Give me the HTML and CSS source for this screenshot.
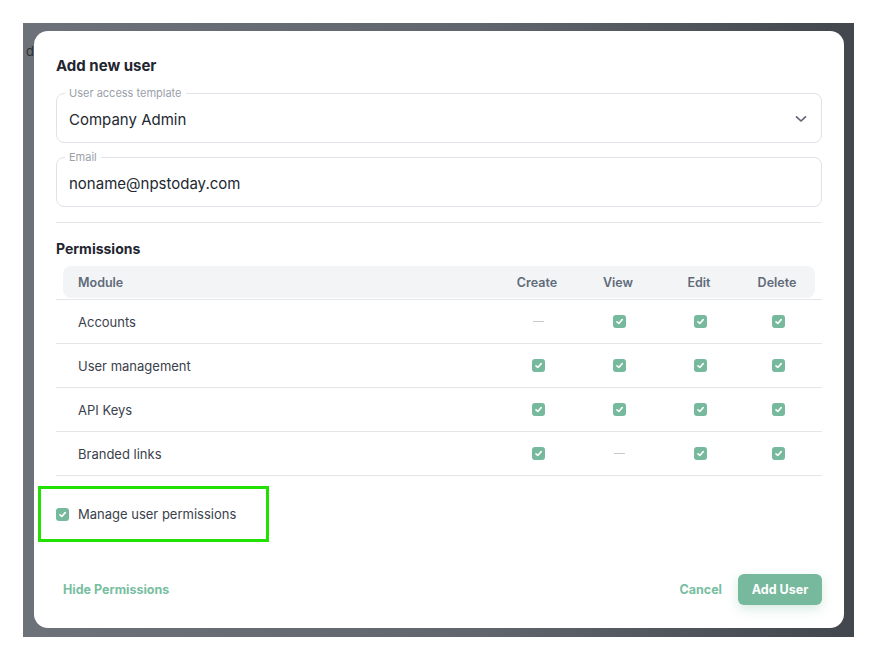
FILE: index.html
```html
<!DOCTYPE html>
<html lang="en">
<head>
    <meta charset="UTF-8">
    <meta name="viewport" content="width=device-width, initial-scale=1.0">
    <title>Add new user</title>
    <link rel="stylesheet" href="styles.css">
</head>
<body>
    <div class="backdrop">
        <div class="page-peek">d</div>
        <div class="modal">
            <h1>Add new user</h1>
            <fieldset class="field">
                <legend>User access template</legend>
                <div class="field-value">
                    <span>Company Admin</span>
                    <svg class="chevron" width="12" height="8" viewBox="0 0 12 8"><path d="M1.5 1.8 L6 6 L10.5 1.8" fill="none" stroke="#5f6773" stroke-width="1.7" stroke-linecap="round" stroke-linejoin="round"/></svg>
                </div>
            </fieldset>
            <fieldset class="field">
                <legend>Email</legend>
                <div class="field-value">
                    <span>noname@npstoday.com</span>
                </div>
            </fieldset>
            <hr class="divider">
            <h2>Permissions</h2>
            <div class="perm-table">
                <div class="perm-head-wrap">
                    <div class="perm-row perm-head">
                        <div class="module">Module</div>
                        <div>Create</div>
                        <div>View</div>
                        <div>Edit</div>
                        <div>Delete</div>
                    </div>
                </div>
                <div id="permRows"></div>
            </div>
            <div class="manage-box">
                <span class="check"></span>
                <span>Manage user permissions</span>
            </div>
            <div class="footer">
                <a class="link-btn hide-link">Hide Permissions</a>
                <div class="footer-actions">
                    <a class="link-btn">Cancel</a>
                    <button class="primary">Add User</button>
                </div>
            </div>
        </div>
    </div>
    <script>
        const modules = [
            { name: 'Accounts', perms: [false, true, true, true] },
            { name: 'User management', perms: [true, true, true, true] },
            { name: 'API Keys', perms: [true, true, true, true] },
            { name: 'Branded links', perms: [true, false, true, true] }
        ];
        const rows = document.getElementById('permRows');
        modules.forEach((m) => {
            const row = document.createElement('div');
            row.className = 'perm-row perm-body';
            let html = `<div class="module">${m.name}</div>`;
            m.perms.forEach((on) => {
                html += on ? '<div><span class="check"></span></div>' : '<div><span class="dash"></span></div>';
            });
            row.innerHTML = html;
            rows.appendChild(row);
        });
    </script>
</body>
</html>
```

FILE: styles.css
```css
body {
    margin: 0;
    background: #fff;
    font-family: 'Inter', 'Noto Sans', sans-serif;
    color: #1f2937;
}
.backdrop {
    margin: 23px 0 0 23px;
    width: 831px;
    height: 614px;
    background: linear-gradient(90deg, #6d7179, #61656d 55%, #42474e);
    display: flex;
    align-items: flex-start;
    overflow: hidden;
}
.page-peek {
    width: 11px;
    flex-shrink: 0;
    text-align: right;
    margin-top: 20px;
    font-size: 13px;
    color: #2b2f36;
}
.modal {
    margin-top: 8px;
    width: 810px;
    height: 597px;
    box-sizing: border-box;
    background: #fff;
    border-radius: 14px;
    padding: 25px 22px 23px 22px;
    display: flex;
    flex-direction: column;
}
h1 {
    margin: 0 0 11px;
    font-size: 15px;
    line-height: 20px;
    font-weight: 700;
    color: #1f2630;
}
.field {
    margin: 0 0 8px;
    padding: 0 8px;
    border: 1px solid #dfe2e6;
    border-radius: 8px;
    min-inline-size: 0;
}
.field legend {
    padding: 0 4px;
    font-size: 11px;
    line-height: 13px;
    color: #9aa1ab;
}
.field-value {
    height: 38px;
    padding: 0 4px 4px;
    display: flex;
    align-items: center;
    justify-content: space-between;
    font-size: 15px;
    color: #222831;
}
.chevron {
    margin-right: 2px;
}
.divider {
    border: none;
    border-top: 1px solid #e4e6ea;
    margin: 7px 0 16px;
}
h2 {
    margin: 0 0 7px;
    font-size: 14px;
    line-height: 20px;
    font-weight: 700;
    color: #1f2630;
}
.perm-head-wrap {
    padding: 0 7px 1px;
    border-bottom: 1px solid #e4e6ea;
}
.perm-row {
    display: grid;
    grid-template-columns: 1fr 80px 82px 80px 76px;
    align-items: center;
}
.perm-row > div {
    display: flex;
    justify-content: center;
    align-items: center;
}
.perm-row > .module {
    justify-content: flex-start;
}
.perm-head {
    height: 32px;
    background: #f3f4f6;
    border-radius: 8px;
    font-size: 12.5px;
    font-weight: 600;
    color: #5f6b79;
}
.perm-head .module {
    padding-left: 15px;
}
.perm-body {
    height: 43px;
    border-bottom: 1px solid #e4e6ea;
    padding-right: 6px;
    font-size: 13px;
    color: #3a414b;
}
.perm-body .module {
    padding-left: 22px;
}
.check {
    display: inline-block;
    width: 13px;
    height: 13px;
    border-radius: 3px;
    background: #76b99c url("data:image/svg+xml,%3Csvg xmlns='http://www.w3.org/2000/svg' width='13' height='13' viewBox='0 0 13 13'%3E%3Cpath d='M4 6.8 L5.8 8.5 L9.2 4.6' fill='none' stroke='white' stroke-width='1.6' stroke-linecap='round' stroke-linejoin='round'/%3E%3C/svg%3E") center no-repeat;
    flex-shrink: 0;
}
.dash {
    display: inline-block;
    width: 11px;
    height: 1px;
    background: #c6cad0;
}
.manage-box {
    margin: 10px 0 0 -18px;
    width: 231px;
    height: 56px;
    box-sizing: border-box;
    border: 3px solid #22e000;
    padding-left: 15px;
    display: flex;
    align-items: center;
    gap: 9px;
    font-size: 13px;
    color: #3a414b;
}
.footer {
    margin-top: auto;
    display: flex;
    justify-content: space-between;
    align-items: center;
}
.link-btn {
    font-size: 12.5px;
    font-weight: 700;
    color: #78bea0;
    cursor: pointer;
}
.hide-link {
    padding-left: 7px;
}
.footer-actions {
    display: flex;
    align-items: center;
    gap: 16px;
}
.primary {
    width: 84px;
    height: 31px;
    border: none;
    border-radius: 6px;
    background: #76b99c;
    color: #fff;
    font-family: inherit;
    font-size: 12.5px;
    font-weight: 700;
    box-shadow: 0 4px 12px rgba(118, 185, 156, 0.3);
    cursor: pointer;
}
```
